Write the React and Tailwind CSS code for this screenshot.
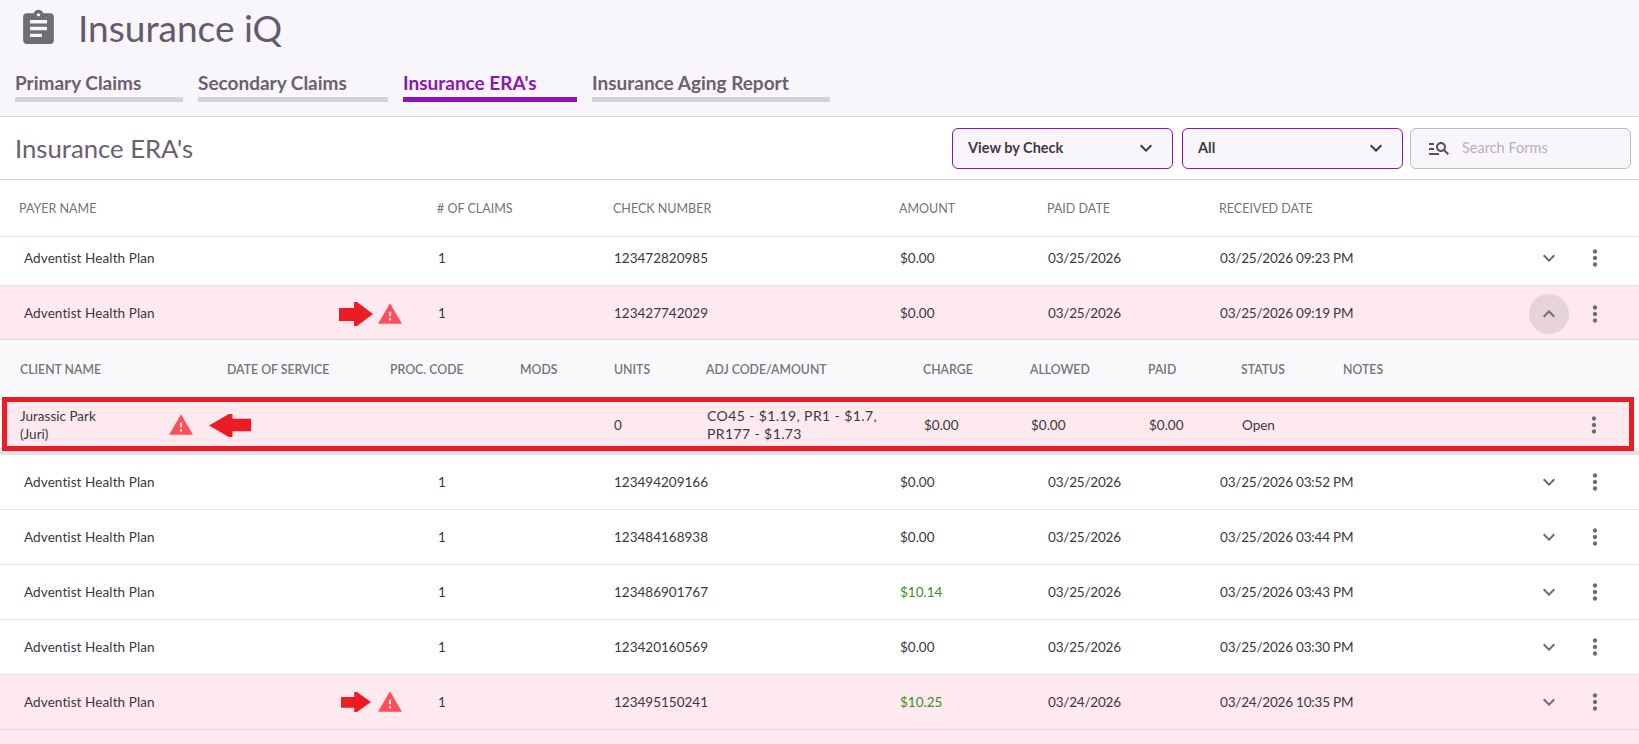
import { MdAssignment, MdManageSearch, MdWarning, MdKeyboardArrowDown, MdKeyboardArrowUp, MdMoreVert } from 'react-icons/md';

const rows = [
  { check: '123472820985', amount: '$0.00', paid: '03/25/2026', received: '03/25/2026 09:23 PM', h: 'h-[49px] pb-[6px]' },
  { check: '123427742029', amount: '$0.00', paid: '03/25/2026', received: '03/25/2026 09:19 PM', h: 'h-[54px] pt-[2px]', alert: true, open: true },
  { check: '123494209166', amount: '$0.00', paid: '03/25/2026', received: '03/25/2026 03:52 PM', h: 'h-[55px]' },
  { check: '123484168938', amount: '$0.00', paid: '03/25/2026', received: '03/25/2026 03:44 PM', h: 'h-[55px]' },
  { check: '123486901767', amount: '$10.14', paid: '03/25/2026', received: '03/25/2026 03:43 PM', h: 'h-[55px]', green: true },
  { check: '123420160569', amount: '$0.00', paid: '03/25/2026', received: '03/25/2026 03:30 PM', h: 'h-[55px]' },
  { check: '123495150241', amount: '$10.25', paid: '03/24/2026', received: '03/24/2026 10:35 PM', h: 'h-[55px]', alert: true, green: true, small: true },
];

const mainCols = 'grid-cols-[414px_176px_286px_148px_172px_1fr]';

const RedArrow = ({ left, small }) => (
  <svg width={left ? 42 : small ? 30 : 34} height={left ? 23 : small ? 20 : 24} viewBox="0 0 34 24" preserveAspectRatio="none" className={left ? 'rotate-180' : ''}>
    <path d="M0 6h15V0h3l16 12-16 12h-3v-5H0z" fill="#ed1c24" />
  </svg>
);

const Row = ({ row }) => (
  <div className={`grid ${mainCols} ${row.h} items-center pl-6 pr-6 border-b ${row.alert ? 'bg-[#fee9ee] border-[#e8d5dc]' : 'border-[#e4e2e6]'}`}>
    <div className="flex items-center">
      <span className="w-[315px] tracking-[0.1px]">Adventist Health Plan</span>
      {row.alert && (
        <>
          <div className={row.small ? 'ml-[2px] w-[34px]' : 'w-[34px]'}><RedArrow small={row.small} /></div>
          <MdWarning className={`${row.small ? 'ml-[2px]' : 'ml-[4px]'} text-[26px] text-[#ff4d5a]`} />
        </>
      )}
    </div>
    <div>1</div>
    <div>{row.check}</div>
    <div className={row.green ? 'text-[#3a8f22]' : ''}>{row.amount}</div>
    <div className="tracking-[-0.2px]">{row.paid}</div>
    <div className="flex items-center justify-between">
      <span className="tracking-[-0.2px]">{row.received}</span>
      <div className="flex items-center gap-1.5">
        <div className={`w-10 h-10 rounded-full flex items-center justify-center text-[24px] text-[#6f6a73] ${row.open ? 'bg-[#e6d3da]' : ''}`}>
          {row.open ? <MdKeyboardArrowUp /> : <MdKeyboardArrowDown />}
        </div>
        <div className="w-10 h-10 flex items-center justify-center text-[26px] text-[#6f6a73]">
          <MdMoreVert />
        </div>
      </div>
    </div>
  </div>
);

const Select = ({ label, className }) => (
  <div className={`w-[221px] h-[41px] flex items-center justify-between pl-[15px] pr-[14px] rounded-md border border-[#8e14b8] bg-[#f8f6fa] text-[14.5px] font-bold text-[#3f3a44] ${className}`}>
    {label}
    <MdKeyboardArrowDown className="text-[24px]" />
  </div>
);

const App = () => {
  return (
    <div className="h-[744px] w-[1639px] overflow-hidden bg-white font-['Lato',sans-serif] text-[13.5px] text-[#3b3740]">
      {/* header */}
      <div className="h-[117px] bg-[#f8f6fa] border-b border-[#d9d7dc] pl-[15px]">
        <div className="h-[56px] flex items-center">
          <MdAssignment className="text-[41px] text-[#6f6c72] ml-[3px]" />
          <h1 className="ml-[19px] text-[37px] text-[#645a6d]">Insurance iQ</h1>
        </div>
        <div className="flex gap-[15px] mt-[13px] text-[19px] font-bold text-[#6b6070]">
          <div className="w-[168px] h-[33px] border-b-[5px] border-[#d5d1da]">Primary Claims</div>
          <div className="w-[190px] h-[33px] border-b-[5px] border-[#d5d1da]">Secondary Claims</div>
          <div className="w-[174px] h-[33px] border-b-[5px] border-[#8e14b8] text-[#8e14b8]">Insurance ERA's</div>
          <div className="w-[238px] h-[33px] border-b-[5px] border-[#d5d1da]">Insurance Aging Report</div>
        </div>
      </div>

      {/* title + filters */}
      <div className="h-[63px] border-b border-[#d9d7dc] flex items-center justify-between pl-[15px] pr-2">
        <h2 className="text-[25.7px] text-[#6b6070]">Insurance ERA's</h2>
        <div className="flex">
          <Select label="View by Check" className="mr-[9px]" />
          <Select label="All" className="mr-[7px]" />
          <div className="w-[221px] h-[41px] flex items-center pl-4 gap-[11px] rounded-md border border-[#bdbac1] bg-[#f8f6fa] text-[14.5px] text-[#b9aec2]">
            <MdManageSearch className="text-[24px] text-[#5c4a6e]" />
            Search Forms
          </div>
        </div>
      </div>

      {/* table head */}
      <div className="grid grid-cols-[418px_176px_286px_148px_172px_1fr] h-[57px] pt-[2px] items-center pl-[19px] border-b border-[#e4e2e6] text-[12.5px] text-[#75727a]">
        <div>PAYER NAME</div>
        <div># OF CLAIMS</div>
        <div>CHECK NUMBER</div>
        <div>AMOUNT</div>
        <div>PAID DATE</div>
        <div>RECEIVED DATE</div>
      </div>

      <Row row={rows[0]} />
      <Row row={rows[1]} />

      {/* expanded claims */}
      <div className="bg-[#f9f9fb]">
        <div className="grid grid-cols-[207px_163px_130px_94px_92px_217px_107px_118px_93px_102px_1fr] h-[57px] pt-[3px] items-center pl-5 text-[12.3px] font-semibold text-[#75727a]">
          <div>CLIENT NAME</div>
          <div>DATE OF SERVICE</div>
          <div>PROC. CODE</div>
          <div>MODS</div>
          <div>UNITS</div>
          <div>ADJ CODE/AMOUNT</div>
          <div>CHARGE</div>
          <div>ALLOWED</div>
          <div>PAID</div>
          <div>STATUS</div>
          <div>NOTES</div>
        </div>
        <div className="pl-[2px] pr-[5px]">
          <div className="grid grid-cols-[207px_163px_130px_94px_93px_217px_107px_118px_93px_1fr] h-[54px] pt-[2px] items-center pl-[13px] border-[5px] border-[#ed1c24] bg-[#fee9ee] leading-[18px]">
            <div className="flex items-center">
              <div className="w-[148px] shrink-0">Jurassic Park<br />(Juri)</div>
              <MdWarning className="text-[26px] text-[#ff4d5a] shrink-0" />
              <div className="ml-[15px] shrink-0"><RedArrow left /></div>
            </div>
            <div />
            <div />
            <div />
            <div>0</div>
            <div className="text-[14px] tracking-[0.4px] whitespace-nowrap">CO45 - $1.19, PR1 - $1.7,<br />PR177 - $1.73</div>
            <div>$0.00</div>
            <div>$0.00</div>
            <div>$0.00</div>
            <div className="flex items-center justify-between pr-[22px]">
              <span>Open</span>
              <MdMoreVert className="text-[26px] text-[#6f6a73]" />
            </div>
          </div>
        </div>
        <div className="h-1 bg-[#e4e4e6]" />
      </div>

      {rows.slice(2).map((row) => (
        <Row key={row.check} row={row} />
      ))}
      <div className="h-[20px] bg-[#fee9ee]" />
    </div>
  );
};

export default App;
